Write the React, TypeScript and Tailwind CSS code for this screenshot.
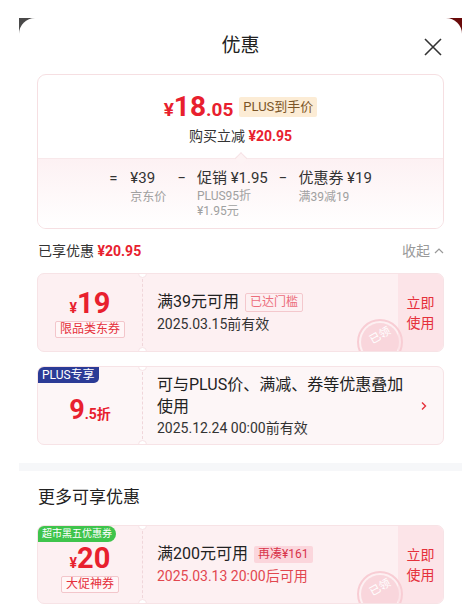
import React from 'react';

const FONT = { fontFamily: "Roboto, 'Noto Sans CJK SC', 'Noto Sans', sans-serif" };

interface CouponProps {
  badge?: React.ReactNode;
  amount: React.ReactNode;
  tag?: string;
  title: React.ReactNode;
  sub: React.ReactNode;
  action?: boolean;
  light?: boolean;
}

const Stamp: React.FC = () => (
  <div className="absolute right-[40px] bottom-[-14px] w-[46px] h-[46px] rounded-full border-[2px] border-[#f8cdd4] flex items-center justify-center">
    <div className="w-[38px] h-[38px] rounded-full bg-[#f9d6dc] flex items-start justify-center pt-[6px]">
      <span className="text-[11px] leading-[13px] text-white -rotate-[30deg]">已领</span>
    </div>
  </div>
);

const Coupon: React.FC<CouponProps> = ({ badge, amount, tag, title, sub, action = true, light }) => (
  <div className={`relative flex h-[79px] rounded-[7px] border border-[#f7e3e6] overflow-hidden ${light ? 'bg-[#fdf6f7]' : 'bg-[#fdf0f2]'}`}>
    {badge}
    <div className="w-[104px] shrink-0 flex flex-col items-center justify-center pt-[2px]">
      {amount}
      {tag && (
        <span className="mt-[3px] px-[4px] h-[17px] leading-[15px] border border-[#f3c6cb] rounded-[2px] text-[12px] text-[#e5303b] bg-[#fff6f7]">{tag}</span>
      )}
    </div>
    <div className="relative w-0 border-l border-dashed border-[#f0d6da]">
      <span className="absolute -left-[5px] -top-[5px] w-[9px] h-[9px] rounded-full bg-white border border-[#f7e3e6]" />
      <span className="absolute -left-[5px] -bottom-[5px] w-[9px] h-[9px] rounded-full bg-white border border-[#f7e3e6]" />
    </div>
    <div className={`flex-1 flex flex-col justify-center pl-[14px] ${action ? 'pr-[8px]' : 'pr-0'}`}>
      {title}
      {sub}
    </div>
    {action ? (
      <div className="w-[45px] shrink-0 bg-[#fce4e8] flex items-center justify-center">
        <span className="text-[14px] leading-[20px] text-[#e5303b] text-center">立即<br />使用</span>
      </div>
    ) : (
      <div className="w-[36px] shrink-0 flex items-center justify-center pr-[2px]">
        <svg width="10" height="10" viewBox="0 0 10 10" fill="none" stroke="#e5303b" strokeWidth="1.4">
          <path d="M3 1.5 L6.5 5 L3 8.5" />
        </svg>
      </div>
    )}
    {action && <Stamp />}
  </div>
);

const App: React.FC = () => {
  return (
    <div className="w-[466px] h-[612px] bg-white overflow-hidden" style={FONT}>
      <div className="ml-[19px] mr-[4px] mt-[18px] bg-gradient-to-r from-[#4a4a4a] via-[#3a1a1a] to-[#6a0a0a]">
        <div className="bg-white rounded-t-[16px] min-h-[600px]">
          <div className="relative h-[56px] flex items-center justify-center">
            <span className="text-[19px] text-[#222]">优惠</span>
            <svg className="absolute right-[20px] top-[20px]" width="18" height="18" viewBox="0 0 18 18" stroke="#333" strokeWidth="1.6" fill="none">
              <path d="M1 1 L17 17 M17 1 L1 17" />
            </svg>
          </div>

          <div className="px-[18px]">
            <div className="rounded-[9px] border border-[#f6dfe2] overflow-hidden">
              <div className="relative h-[83px] flex flex-col items-center pt-[18px]">
                <div className="flex items-center gap-[6px]">
                  <span className="text-[#e8202e] font-bold leading-none">
                    <span className="text-[19px]">¥</span>
                    <span className="text-[28px]">18</span>
                    <span className="text-[19px]">.05</span>
                  </span>
                  <span className="h-[20px] px-[4px] leading-[20px] bg-[#fcecd5] text-[#7b5527] text-[13px] rounded-[2px]">PLUS到手价</span>
                </div>
                <div className="mt-[6px] text-[14px] text-[#333] leading-[18px]">
                  购买立减 <span className="text-[#e8202e] font-bold">¥20.95</span>
                </div>
                <span className="absolute left-1/2 -translate-x-1/2 bottom-[-5px] w-[9px] h-[9px] rotate-45 bg-[#fdf3f4] border-l border-t border-[#f6e2e5]" />
              </div>
              <div className="h-[70px] bg-gradient-to-b from-[#fdf1f3] to-white border-t border-[#f8e8ea] flex justify-center pt-[9px]">
                <div className="flex items-start gap-[11px] text-[15px] text-[#333] leading-[20px]">
                  <span className="mr-[2px]">=</span>
                  <div className="flex flex-col">
                    <span>¥39</span>
                    <span className="text-[12px] text-[#a0a0a0] leading-[16px] mt-[1px]">京东价</span>
                  </div>
                  <span>−</span>
                  <div className="flex flex-col">
                    <span>促销 ¥1.95</span>
                    <span className="text-[12px] text-[#a0a0a0] leading-[15px] mt-[1px]">PLUS95折</span>
                    <span className="text-[12px] text-[#a0a0a0] leading-[15px]">¥1.95元</span>
                  </div>
                  <span>−</span>
                  <div className="flex flex-col">
                    <span>优惠券 ¥19</span>
                    <span className="text-[12px] text-[#a0a0a0] leading-[16px] mt-[1px]">满39减19</span>
                  </div>
                </div>
              </div>
            </div>

            <div className="h-[44px] flex items-center justify-between pl-[1px]">
              <span className="text-[14px] text-[#333]">
                已享优惠 <span className="text-[#e8202e] font-bold">¥20.95</span>
              </span>
              <span className="flex items-center gap-[4px] text-[14px] text-[#999]">
                收起
                <svg width="10" height="6" viewBox="0 0 10 6" fill="none" stroke="#999" strokeWidth="1.2">
                  <path d="M1 5 L5 1 L9 5" />
                </svg>
              </span>
            </div>

            <div className="flex flex-col gap-[14px]">
              <Coupon
                amount={
                  <span className="text-[#e8202e] font-bold leading-none">
                    <span className="text-[14px]">¥</span>
                    <span className="text-[29px]">19</span>
                  </span>
                }
                tag="限品类东券"
                title={
                  <div className="flex items-center gap-[6px]">
                    <span className="text-[16px] text-[#222] leading-[22px]">满39元可用</span>
                    <span className="h-[19px] px-[4px] leading-[17px] border border-[#f4c8cd] rounded-[2px] text-[12px] text-[#ec6e7c]">已达门槛</span>
                  </div>
                }
                sub={<span className="text-[14px] text-[#333] leading-[20px] mt-[1px]">2025.03.15前有效</span>}
              />
              <Coupon
                light
                action={false}
                badge={
                  <span className="absolute left-0 top-0 h-[16px] px-[4px] leading-[16px] bg-[#2b3b96] text-white text-[12px] rounded-br-[5px]">PLUS专享</span>
                }
                amount={
                  <span className="text-[#e8202e] font-bold leading-none mt-[8px]">
                    <span className="text-[27px]">9</span>
                    <span className="text-[14px]">.5折</span>
                  </span>
                }
                title={<span className="text-[16px] text-[#222] leading-[22px]">可与PLUS价、满减、券等优惠叠加使用</span>}
                sub={<span className="text-[14px] text-[#333] leading-[20px]">2025.12.24 00:00前有效</span>}
              />
            </div>
          </div>

          <div className="mt-[18px] h-[8px] bg-[#f6f7f9]" />

          <div className="px-[18px]">
            <div className="h-[54px] flex items-center pl-[1px]">
              <span className="text-[17px] text-[#222]">更多可享优惠</span>
            </div>
            <Coupon
              badge={
                <span className="absolute left-0 top-0 h-[16px] px-[4px] leading-[16px] bg-[#3fc44c] text-white text-[10px] rounded-tl-[6px] rounded-r-full">超市黑五优惠券</span>
              }
              amount={
                <span className="text-[#e8202e] font-bold leading-none mt-[6px]">
                  <span className="text-[14px]">¥</span>
                  <span className="text-[29px]">20</span>
                </span>
              }
              tag="大促神券"
              title={
                <div className="flex items-center gap-[6px]">
                  <span className="text-[16px] text-[#222] leading-[22px]">满200元可用</span>
                  <span className="h-[17px] px-[4px] leading-[17px] bg-[#fbd6dc] rounded-[2px] text-[12px] text-[#d8334a]">再凑¥161</span>
                </div>
              }
              sub={<span className="text-[14px] text-[#e2474f] leading-[20px] mt-[1px]">2025.03.13 20:00后可用</span>}
            />
          </div>
        </div>
      </div>
    </div>
  );
};

export default App;
